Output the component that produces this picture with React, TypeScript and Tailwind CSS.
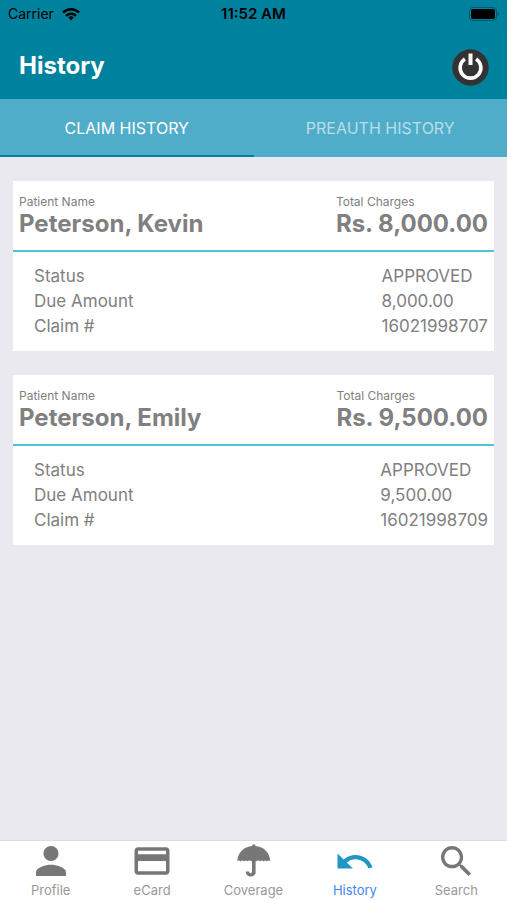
import React from "react";
import { IoMdPerson, IoMdCard, IoMdUndo, IoMdSearch } from "react-icons/io";

interface Claim {
    patient: string;
    total: string;
    status: string;
    dueAmount: string;
    claimNo: string;
}

interface NavItem {
    label: string;
    icon: React.ComponentType<{ size?: number; className?: string }>;
    active?: boolean;
}

const UmbrellaIcon: React.FC<{ size?: number; className?: string }> = ({ size = 40, className }) => (
    <svg width={size} height={size} viewBox="0 0 40 40" className={className}>
        <path
            fill="currentColor"
            d="M19.300 3.500h3v1.500C31 5.800 36.800 11.500 37.300 20.300c-.8-1-2.400-1-3.300.2-1-1.200-2.500-1.200-3.400 0-.9-1.200-2.200-1.200-3.100-.2-1.500-1.300-3.500-1.200-4.900.3V31.300c0 5.600-9.800 5.800-9.900-.8h3.400c.1 2.500 2.900 2.500 2.900-.1V20.600c-1.400-1.500-3.400-1.600-4.900-.3-.9-1-2.200-1-3.100.2-.9-1.200-2.400-1.200-3.400 0-.9-1.200-2.500-1.200-3.300-.2C4.800 11.500 10.600 5.800 19.300 5z"
        />
    </svg>
);

const claims: Claim[] = [
    {
        patient: "Peterson, Kevin",
        total: "Rs. 8,000.00",
        status: "APPROVED",
        dueAmount: "8,000.00",
        claimNo: "16021998707",
    },
    {
        patient: "Peterson, Emily",
        total: "Rs. 9,500.00",
        status: "APPROVED",
        dueAmount: "9,500.00",
        claimNo: "16021998709",
    },
];

const navItems: NavItem[] = [
    { label: "Profile", icon: IoMdPerson },
    { label: "eCard", icon: IoMdCard },
    { label: "Coverage", icon: UmbrellaIcon },
    { label: "History", icon: IoMdUndo, active: true },
    { label: "Search", icon: IoMdSearch },
];

const StatusBar: React.FC = () => (
    <div className="grid grid-cols-3 items-center h-7 px-2 text-sm text-black">
        <div className="flex items-center gap-2">
            <span>Carrier</span>
            <svg width="18" height="13" viewBox="0 0 18 13" fill="none" stroke="#000" strokeWidth="2.4">
                <path d="M1 4.6a11.4 11.4 0 0 1 16 0" />
                <path d="M4 7.8a7.1 7.1 0 0 1 10 0" />
                <path d="M9 12.4 6.2 9.6a4 4 0 0 1 5.6 0z" fill="#000" stroke="none" />
            </svg>
        </div>
        <span className="text-center text-[15px] font-semibold">11:52 AM</span>
        <svg className="justify-self-end" width="30" height="14" viewBox="0 0 30 14">
            <rect x="0.5" y="0.5" width="27" height="13" rx="3.5" fill="none" stroke="#000" strokeOpacity="0.3" />
            <rect x="2" y="2" width="24" height="10" rx="2" fill="#000" />
            <path d="M28.600 5v4c.7-.3 1.200-1 1.200-2s-.5-1.700-1.200-2z" fill="#000" fillOpacity="0.4" />
        </svg>
    </div>
);

const ClaimCard: React.FC<{ claim: Claim }> = ({ claim }) => {
    return (
        <article className="bg-white text-[#808080]">
            <div className="flex justify-between h-[71px] px-[6px] pt-[13px] border-b-2 border-[#4fc3d5]">
                <div>
                    <p className="text-xs leading-4">Patient Name</p>
                    <h2 className="text-2xl leading-7 font-bold">{claim.patient}</h2>
                </div>
                <div>
                    <p className="text-xs leading-4">Total Charges</p>
                    <p className="text-2xl leading-7 font-bold">{claim.total}</p>
                </div>
            </div>
            <div className="flex justify-between pl-[21px] pr-[6px] py-3 text-[17px] leading-[25px]">
                <div>
                    <p>Status</p>
                    <p>Due Amount</p>
                    <p>Claim #</p>
                </div>
                <div>
                    <p>{claim.status}</p>
                    <p>{claim.dueAmount}</p>
                    <p>{claim.claimNo}</p>
                </div>
            </div>
        </article>
    );
};

const App: React.FC = () => {
    return (
        <div className="flex flex-col min-h-screen bg-[#e9e9ef] font-['Inter',sans-serif]">
            <header className="bg-[#00819d]">
                <StatusBar />
                <div className="flex items-center justify-between h-[71px] pt-2 pl-[19px] pr-[18px]">
                    <h1 className="pb-1 text-2xl font-bold text-white">History</h1>
                    <button type="button" aria-label="Log out">
                        <svg width="37" height="37" viewBox="0 0 37 37" fill="none">
                            <circle cx="18.500" cy="18.500" r="18.200" fill="#333" />
                            <path d="M12.900 10a10.400 10.400 0 1 0 11.200 0" stroke="#fff" strokeWidth="3.600" />
                            <path d="M18.500 4.500v11.500" stroke="#fff" strokeWidth="4" />
                        </svg>
                    </button>
                </div>
            </header>

            <div className="grid grid-cols-2 h-[58px] bg-[#50adca] text-base text-white">
                <button type="button" className="pt-[2px] border-b-2 border-[#00819d]">
                    CLAIM HISTORY
                </button>
                <button type="button" className="pt-[2px] border-b-2 border-transparent text-white/60">
                    PREAUTH HISTORY
                </button>
            </div>

            <main className="flex flex-col flex-1 gap-6 px-[13px] py-6">
                {claims.map((claim) => (
                    <ClaimCard key={claim.claimNo} claim={claim} />
                ))}
            </main>

            <nav className="grid grid-cols-5 h-[60px] bg-white border-t border-[#dcdce0]">
                {navItems.map(({ label, icon: Icon, active }) => (
                    <a
                        key={label}
                        href="#"
                        className={`flex flex-col items-center text-[13px] leading-[18px] ${active ? "text-[#4285f4]" : "text-[#999]"}`}
                    >
                        <Icon size={40} className={active ? "text-[#2196c3]" : "text-[#777]"} />
                        {label}
                    </a>
                ))}
            </nav>
        </div>
    );
};

export default App;
